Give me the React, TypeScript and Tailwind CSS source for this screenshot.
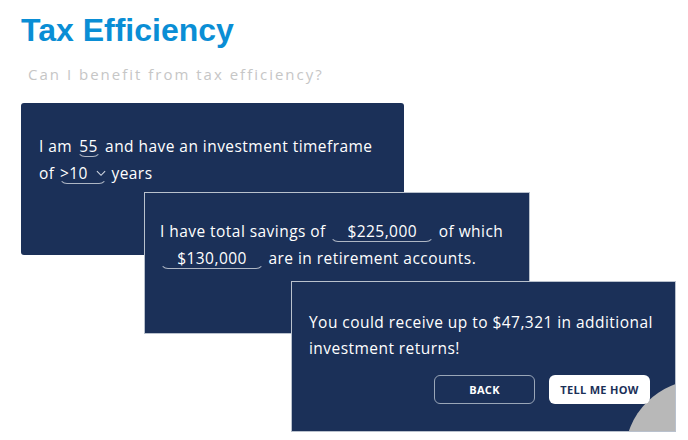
import React from "react";

const font = { fontFamily: '"Open Sans", "Liberation Sans", sans-serif' };

function Field({ children, className = "" }: { children: React.ReactNode; className?: string }) {
  return (
    <span
      className={`inline-flex items-center justify-center rounded-b-[8px] border-b-[1.5px] border-l border-r border-l-transparent border-r-transparent border-b-[#aeb6c4] leading-[20px] ${className}`}
    >
      {children}
    </span>
  );
}

export default function App() {
  return (
    <div className="relative h-[440px] w-[688px] overflow-hidden bg-white" style={font}>
      <h1
        className="pl-[21px] pt-[10px] text-[32px] font-bold leading-[40px] text-[#0a8ed5]"
        style={{ fontFamily: '"Liberation Sans", Arial, sans-serif' }}
      >
        Tax Efficiency
      </h1>
      <p className="mt-[14px] pl-[28px] text-[15px] leading-[20px] tracking-[2px] text-[#c6c6c6]">
        Can I benefit from tax efficiency?
      </p>
      <div className="mt-[19px] flex flex-col pl-[21px] text-[15.5px] tracking-[0.45px] text-white">
        <div className="h-[152px] w-[383px] rounded-[3px] bg-[#1b3058] pl-[18px] pt-[30px] leading-[27px]">
          <div>
            I am <Field className="w-[24px]">55</Field> and have an investment timeframe
          </div>
          <div>
            of{" "}
            <Field className="w-[48px] gap-[8px]">
              &gt;10
              <svg width="11" height="7" viewBox="0 0 11 7" fill="none">
                <path d="M1 1l4.5 4.5L10 1" stroke="#d0d6e0" strokeWidth="1.2" />
              </svg>
            </Field>{" "}
            years
          </div>
        </div>
        <div className="relative -mt-[63px] ml-[123px] h-[142px] w-[386px] border border-[#b9c1cd] bg-[#1b3058] pl-[15px] pt-[25px] leading-[27px]">
          <div>
            I have total savings of <Field className="w-[104px]">$225,000</Field> of which
          </div>
          <div>
            <Field className="w-[104px]">$130,000</Field> are in retirement accounts.
          </div>
        </div>
        <div className="relative -mt-[53px] ml-[270px] h-[151px] w-[385px] overflow-hidden border border-[#b9c1cd] bg-[#1b3058] pl-[17px] pt-[27px] leading-[26px]">
          <div>You could receive up to $47,321 in additional</div>
          <div>investment returns!</div>
          <div className="mt-[14px] flex gap-[14px] pl-[125px]">
            <button className="h-[29px] w-[101px] rounded-[6px] border border-[#9aa6b8] text-[11px] font-bold tracking-[0.3px] text-white">
              BACK
            </button>
            <button className="relative z-10 h-[29px] w-[101px] rounded-[6px] bg-white text-[11px] font-bold tracking-[0.3px] text-[#1b3058]">
              TELL ME HOW
            </button>
          </div>
          <div className="absolute left-[333px] top-[98px] h-[150px] w-[150px] rounded-full bg-[#b8b8b8]" />
        </div>
      </div>
    </div>
  );
}
